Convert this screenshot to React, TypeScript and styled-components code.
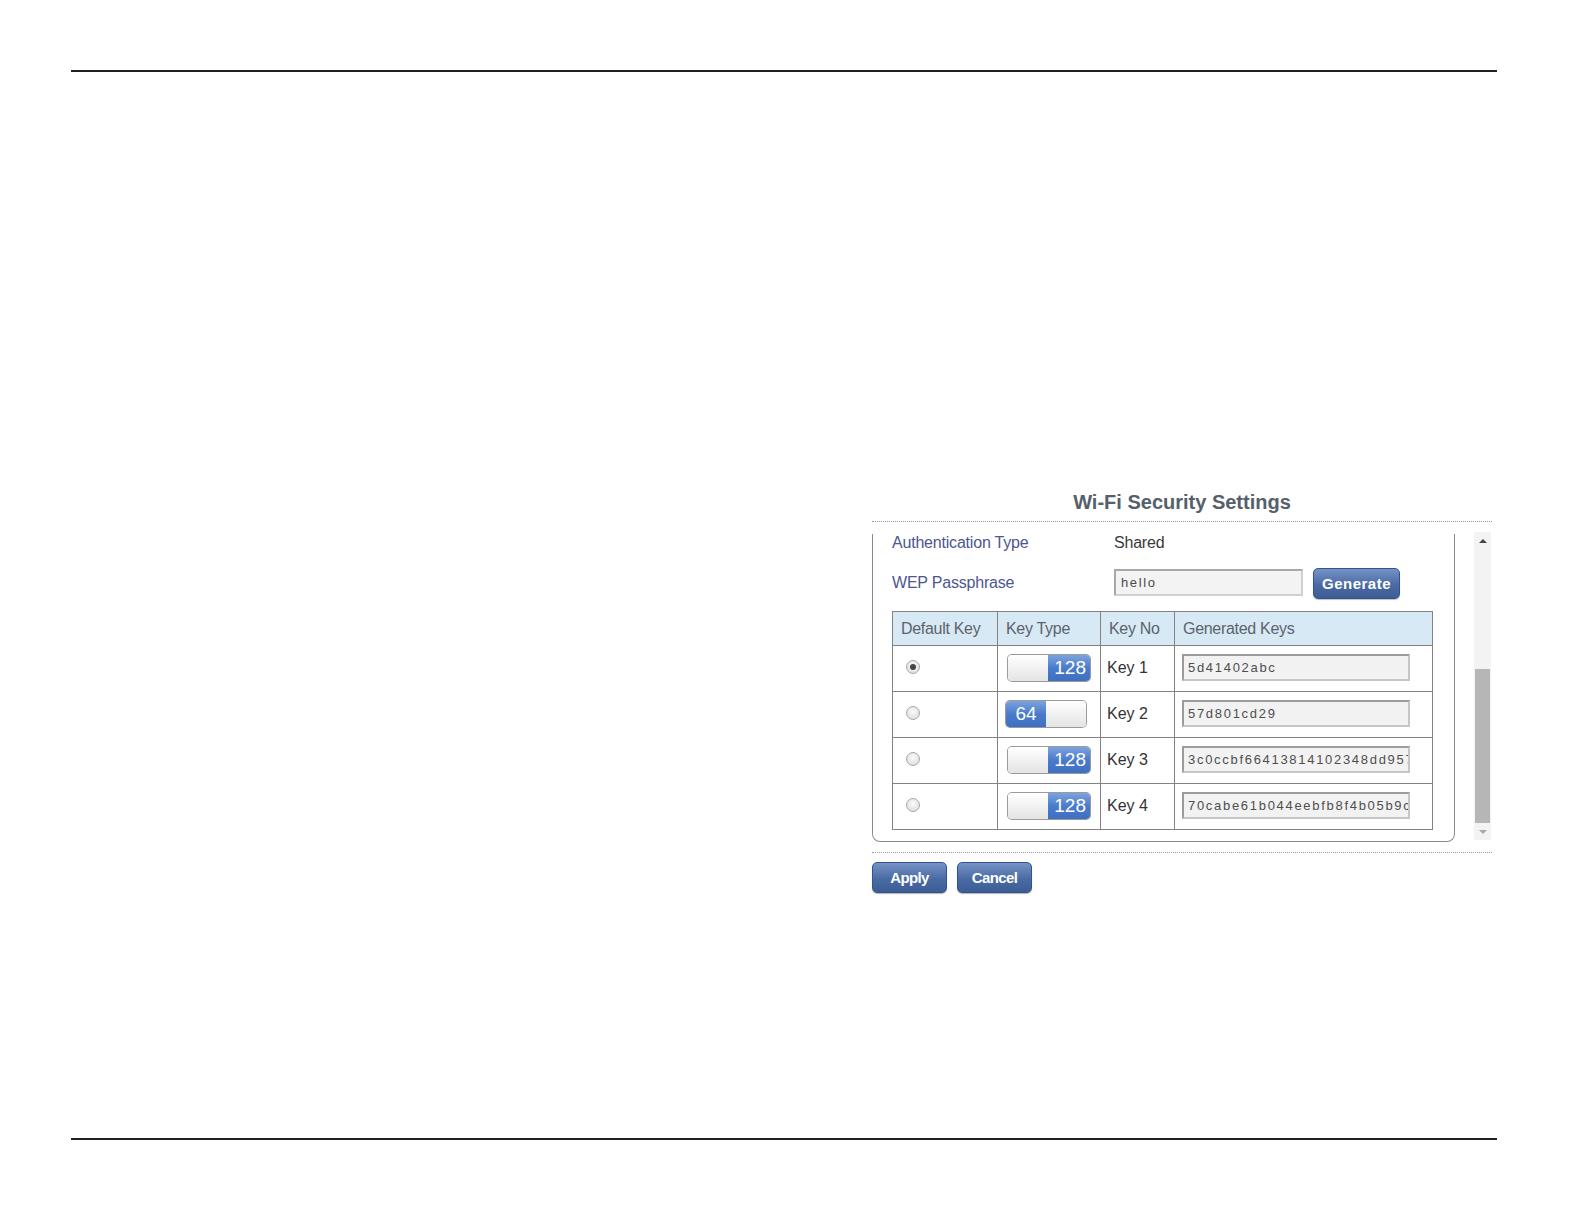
import React from "react";
import styled, { createGlobalStyle } from "styled-components";

interface KeyRow {
    no: number;
    size: 64 | 128;
    value: string;
    selected?: boolean;
}

const keys: KeyRow[] = [
    { no: 1, size: 128, value: "5d41402abc", selected: true },
    { no: 2, size: 64, value: "57d801cd29" },
    { no: 3, size: 128, value: "3c0ccbf66413814102348dd957" },
    { no: 4, size: 128, value: "70cabe61b044eebfb8f4b05b9c" },
];

const GlobalStyle = createGlobalStyle`
    html, body {
        margin: 0;
        padding: 0;
        background: #ffffff;
        overflow: hidden;
    }
    body {
        font-family: "Liberation Sans", Arial, sans-serif;
    }
`;

const App: React.FunctionComponent = () => (
    <>
        <GlobalStyle />
        <Page>
            <Rule />
            <Main>
                <Section>
                    <Title>Wi-Fi Security Settings</Title>
                    <Dotted />
                    <ScrollFrame>
                        <Panel>
                            <FieldRow $height={18}>
                                <Label>Authentication Type</Label>
                                <Value>Shared</Value>
                            </FieldRow>
                            <FieldRow $height={30} $top={16}>
                                <Label>WEP Passphrase</Label>
                                <PassInput>hello</PassInput>
                                <GenerateButton>Generate</GenerateButton>
                            </FieldRow>
                            <KeyTable>
                                <colgroup>
                                    <col style={{ width: 105 }} />
                                    <col style={{ width: 103 }} />
                                    <col style={{ width: 74 }} />
                                    <col />
                                </colgroup>
                                <thead>
                                    <tr>
                                        <Th>Default Key</Th>
                                        <Th>Key Type</Th>
                                        <Th>Key No</Th>
                                        <Th>Generated Keys</Th>
                                    </tr>
                                </thead>
                                <tbody>
                                    {keys.map((k) => (
                                        <tr key={k.no}>
                                            <Td $pad={13}>
                                                <Radio $checked={!!k.selected} />
                                            </Td>
                                            <Td $pad={10}>
                                                <Toggle size={k.size} />
                                            </Td>
                                            <Td $pad={6}>
                                                <KeyNo>Key {k.no}</KeyNo>
                                            </Td>
                                            <Td $pad={7}>
                                                <KeyInput>{k.value}</KeyInput>
                                            </Td>
                                        </tr>
                                    ))}
                                </tbody>
                            </KeyTable>
                        </Panel>
                        <Scrollbar>
                            <Arrow $up />
                            <Track>
                                <Thumb />
                            </Track>
                            <Arrow />
                        </Scrollbar>
                    </ScrollFrame>
                    <Dotted />
                    <Actions>
                        <ActionButton>Apply</ActionButton>
                        <ActionButton>Cancel</ActionButton>
                    </Actions>
                </Section>
            </Main>
            <Rule />
        </Page>
    </>
);

const Toggle: React.FunctionComponent<{ size: 64 | 128 }> = ({ size }) =>
    size === 128 ? (
        <ToggleBox>
            <Knob />
            <ToggleOn $side="right">128</ToggleOn>
        </ToggleBox>
    ) : (
        <ToggleBox $shift={-2} $width={80}>
            <ToggleOn $side="left">64</ToggleOn>
            <Knob />
        </ToggleBox>
    );

export default App;

const Page = styled.div`
    width: 1584px;
    height: 1224px;
    box-sizing: border-box;
    padding: 70px 87px 0 71px;
    display: flex;
    flex-direction: column;
    overflow: hidden;
`;

const Rule = styled.div`
    height: 2px;
    flex-shrink: 0;
    background: #231f20;
`;

const Main = styled.div`
    height: 1066px;
    flex-shrink: 0;
    box-sizing: border-box;
    padding: 418px 0 0 801px;
`;

const Section = styled.div`
    width: 620px;
`;

const Title = styled.div`
    text-align: center;
    font-size: 20px;
    line-height: 24px;
    font-weight: 700;
    color: #56606a;
    margin-bottom: 7px;
`;

const Dotted = styled.div`
    border-top: 1px dotted #9a9a9a;
`;

const ScrollFrame = styled.div`
    display: flex;
    align-items: flex-start;
    padding: 10px 0 10px 0;
`;

const Panel = styled.div`
    width: 583px;
    box-sizing: border-box;
    margin-top: 2px;
    padding: 0 21px 11px 19px;
    border: 1.5px solid #8a8a8a;
    border-top: none;
    border-radius: 0 0 8px 8px;
`;

const FieldRow = styled.div<{ $height: number; $top?: number }>`
    display: flex;
    align-items: center;
    height: ${({ $height }) => $height}px;
    margin-top: ${({ $top }) => $top ?? 0}px;
`;

const Label = styled.div`
    width: 222px;
    flex-shrink: 0;
    font-size: 16px;
    color: #4d5690;
    letter-spacing: -0.2px;
`;

const Value = styled.div`
    font-size: 16px;
    color: #3a3a3a;
    letter-spacing: -0.2px;
`;

const PassInput = styled.div`
    width: 189px;
    height: 27px;
    box-sizing: border-box;
    border: 2px solid #a8a8a8;
    border-right-color: #d0d0d0;
    border-bottom-color: #d0d0d0;
    background: #f3f3f3;
    font-size: 13px;
    letter-spacing: 1.6px;
    color: #4a4a4a;
    padding: 0 5px;
    line-height: 23px;
    margin-top: -1px;
`;

const GenerateButton = styled.div`
    margin-left: 10px;
    width: 87px;
    height: 31px;
    box-sizing: border-box;
    border: 1px solid #34538a;
    border-radius: 5px;
    background: linear-gradient(#7593c6, #4a6aa4 55%, #3d5d96);
    color: #ffffff;
    font-size: 15px;
    font-weight: 700;
    letter-spacing: 0.5px;
    text-align: center;
    line-height: 29px;
    box-shadow: 0 1px 1px rgba(0, 0, 0, 0.25);
`;

const KeyTable = styled.table`
    margin-top: 13px;
    width: 541px;
    border-collapse: collapse;
    table-layout: fixed;
`;

const Th = styled.th`
    height: 33px;
    padding: 0 0 0 8px;
    text-align: left;
    font-size: 16px;
    font-weight: 400;
    color: #5d636b;
    letter-spacing: -0.3px;
    white-space: nowrap;
    background: #d7e9f5;
    border: 1px solid #828282;
`;

const Td = styled.td<{ $pad: number }>`
    height: 45px;
    padding: 0 0 0 ${({ $pad }) => $pad}px;
    border: 1px solid #828282;
    vertical-align: middle;
`;

const Radio = styled.div<{ $checked: boolean }>`
    width: 12px;
    height: 12px;
    border-radius: 50%;
    border: 1px solid #a9a9a9;
    background: radial-gradient(circle at 50% 40%, #fafafa, #d8d8d8);
    position: relative;
    margin-top: -4px;
    &::after {
        content: "";
        display: ${({ $checked }) => ($checked ? "block" : "none")};
        position: absolute;
        left: 3px;
        top: 3px;
        width: 6px;
        height: 6px;
        border-radius: 50%;
        background: #444;
    }
`;

const ToggleBox = styled.div<{ $shift?: number; $width?: number }>`
    display: flex;
    width: ${({ $width }) => $width ?? 82}px;
    height: 26px;
    margin-left: ${({ $shift }) => $shift ?? 0}px;
    margin-top: -1px;
    border-radius: 4px;
    overflow: hidden;
    box-shadow: 0 0 0 1px #9a9a9a;
`;

const Knob = styled.div`
    width: 40px;
    flex-shrink: 0;
    background: linear-gradient(#ffffff, #e4e4e4);
`;

const ToggleOn = styled.div<{ $side: "left" | "right" }>`
    flex: 1;
    background: linear-gradient(#7ca3de, #4a7bcb 50%, #3f6fc2);
    color: #ffffff;
    font-size: 19px;
    line-height: 26px;
    text-align: ${({ $side }) => ($side === "right" ? "right" : "center")};
    padding-right: ${({ $side }) => ($side === "right" ? "4px" : "0")};
`;

const KeyNo = styled.div`
    font-size: 16px;
    color: #333333;
    margin-top: -2px;
`;

const KeyInput = styled.div`
    width: 228px;
    height: 27px;
    box-sizing: border-box;
    border: 2px solid #9c9c9c;
    border-right-color: #c6c6c6;
    border-bottom-color: #c6c6c6;
    background: #f2f2f2;
    font-size: 13px;
    letter-spacing: 1.7px;
    color: #4e4e4e;
    padding: 0 4px;
    line-height: 23px;
    white-space: nowrap;
    overflow: hidden;
    margin-top: -3px;
`;

const Scrollbar = styled.div`
    margin-left: 19px;
    width: 17px;
    height: 308px;
    display: flex;
    flex-direction: column;
    background: #f3f3f3;
`;

const Arrow = styled.div<{ $up?: boolean }>`
    height: 17px;
    display: flex;
    align-items: center;
    justify-content: center;
    &::before {
        content: "";
        border-left: 4px solid transparent;
        border-right: 4px solid transparent;
        ${({ $up }) => ($up ? "border-bottom: 4px solid #444;" : "border-top: 4px solid #a8a8a8;")}
    }
`;

const Track = styled.div`
    flex: 1;
    display: flex;
    flex-direction: column;
    justify-content: flex-end;
    padding: 0 1px;
`;

const Thumb = styled.div`
    height: 154px;
    background: #b6b6b6;
`;

const Actions = styled.div`
    display: flex;
    gap: 10px;
    margin-top: 9px;
`;

const ActionButton = styled.div`
    width: 75px;
    height: 31px;
    box-sizing: border-box;
    border: 1px solid #34538a;
    border-radius: 5px;
    background: linear-gradient(#7593c6, #4a6aa4 55%, #3d5d96);
    color: #ffffff;
    font-size: 15px;
    font-weight: 700;
    letter-spacing: -0.6px;
    text-align: center;
    line-height: 29px;
    box-shadow: 0 1px 1px rgba(0, 0, 0, 0.3);
`;
